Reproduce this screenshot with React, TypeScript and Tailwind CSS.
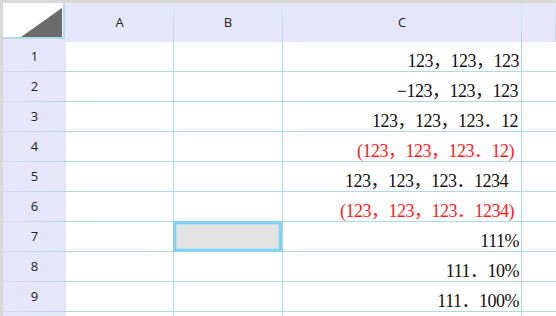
import React from "react";

type Row = { text: string; red?: boolean; pr: string };

const rows: Row[] = [
  { text: "123，123，123", pr: "pr-[2px]" },
  { text: "−123，123，123", pr: "pr-[3px]" },
  { text: "123，123，123．12", pr: "pr-[3px]" },
  { text: "(123，123，123．12)", red: true, pr: "pr-[7px]" },
  { text: "123，123，123．1234", pr: "pr-[13px]" },
  { text: "(123，123，123．1234)", red: true, pr: "pr-[7px]" },
  { text: "111%", pr: "pr-[2px]" },
  { text: "111．10%", pr: "pr-[2px]" },
  { text: "111．100%", pr: "pr-[2px]" },
  { text: "", pr: "pr-[2px]" },
];

const serif = { fontFamily: '"Liberation Serif", "Noto Sans CJK SC", serif' };

function HeaderCell({ label }: { label: string }) {
  return (
    <div className="flex h-full bg-[#e6e6fa]">
      <div className="flex flex-1 items-center justify-center text-[13px] text-[#222]" style={{ fontFamily: '"Open Sans", "Noto Sans", sans-serif' }}>
        {label}
      </div>
      <div className="h-full w-px bg-gradient-to-b from-[#e0e4f6] to-[#b6dbe8]" />
    </div>
  );
}

function RowHeader({ n }: { n: string }) {
  return (
    <div className="flex h-full flex-col bg-[#e6e6fa]">
      <div className="flex flex-1 items-center justify-center text-[13px] text-[#222]" style={{ fontFamily: '"Open Sans", "Noto Sans", sans-serif' }}>
        {n}
      </div>
      <div className="h-px w-full bg-gradient-to-r from-[#d8dcee] to-[#a9d6e4]" />
    </div>
  );
}

export default function App() {
  return (
    <div className="h-[316px] w-[556px] overflow-hidden bg-[#d9d9d9] pl-[3px] pt-[3px]">
      <div className="grid h-[330px] grid-cols-[63px_108px_109px_239px_1fr] grid-rows-[39px_repeat(10,30px)] bg-white">
        {/* corner */}
        <div className="flex h-full items-start justify-start bg-[#e6e6fa]">
          <div className="relative h-[36px] w-[62px] border-b-2 border-r-2 border-[#b3dbe6] bg-white">
            <svg width="60" height="34" viewBox="0 0 60 34" className="block">
              <polygon points="18,34 59,5 59,34" fill="#6b6b6b" />
            </svg>
          </div>
        </div>
        <HeaderCell label="A" />
        <HeaderCell label="B" />
        <HeaderCell label="C" />
        <HeaderCell label="" />

        {rows.map((r, i) => (
          <React.Fragment key={i}>
            <RowHeader n={i === 9 ? "" : String(i + 1)} />
            <div className="border-b border-r border-[#add8e6]" />
            <div className={i === 6 ? "relative border-b border-r border-[#add8e6]" : "border-b border-r border-[#add8e6]"}>
              {i === 6 && (
                <div className="absolute -left-px -top-px -bottom-px right-0 border-[3px] border-[#82d2f4] bg-[#e3e3e3]">
                  <div className="h-full w-full border border-[#b9e3f3]" />
                </div>
              )}
            </div>
            <div
              className={`flex items-end justify-end whitespace-pre border-b border-r border-[#add8e6] pb-0 text-[18px] leading-[20px] tracking-[-0.5px] ${r.pr} ${r.red ? "text-[#ff1a1a]" : "text-[#111]"}`}
              style={serif}
            >
              {r.text}
            </div>
            <div className="border-b border-[#add8e6]" />
          </React.Fragment>
        ))}
      </div>
    </div>
  );
}
